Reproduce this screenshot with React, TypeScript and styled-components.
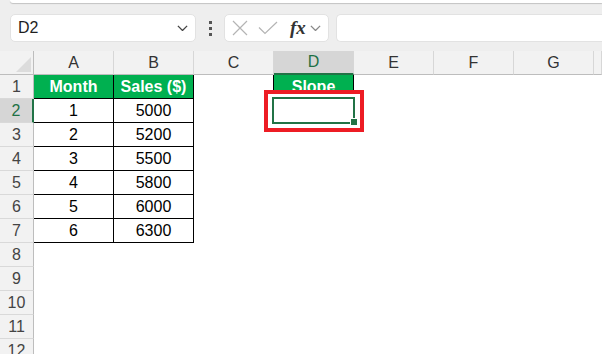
import React from "react";
import styled, { createGlobalStyle } from "styled-components";

const GlobalStyle = createGlobalStyle`
  html, body {
    margin: 0;
    padding: 0;
    background: #ffffff;
    overflow: hidden;
    font-family: "Liberation Sans", Arial, sans-serif;
  }
`;

const Page = styled.div`
  width: 602px;
  height: 354px;
  overflow: hidden;
  background: #ffffff;
`;

const Toolbar = styled.div`
  height: 51px;
  background: #eeeeee;
  display: flex;
  flex-direction: column;
`;

const RibbonEdge = styled.div`
  height: 3px;
  margin-left: 10px;
  background: #ffffff;
  border-bottom-left-radius: 6px;
  box-shadow: 0 1px 1px rgba(0, 0, 0, 0.18);
`;

const FormulaRow = styled.div`
  display: flex;
  align-items: center;
  margin-top: 11px;
  height: 28px;
  padding-left: 10px;
`;

const NameBox = styled.div`
  width: 186px;
  height: 28px;
  box-sizing: border-box;
  background: #ffffff;
  border-radius: 5px;
  border: 1px solid #e2e2e2;
  display: flex;
  align-items: center;
  justify-content: space-between;
  padding: 0 7px 0 7px;
  font-size: 16px;
  color: #1f1f1f;
`;

const Grip = styled.div`
  width: 28px;
  display: flex;
  flex-direction: column;
  align-items: center;
  gap: 3px;
  & span {
    width: 3px;
    height: 3px;
    background: #555555;
  }
`;

const FormulaButtons = styled.div`
  width: 105px;
  height: 28px;
  box-sizing: border-box;
  background: #ffffff;
  border-radius: 5px;
  border: 1px solid #e2e2e2;
  display: flex;
  align-items: center;
  padding-left: 7px;
  gap: 10px;
`;

const Fx = styled.span`
  font-family: "Liberation Serif", "Times New Roman", serif;
  font-style: italic;
  font-weight: bold;
  font-size: 19px;
  color: #333333;
  margin-left: 2px;
  display: flex;
  align-items: center;
  gap: 4px;
`;

const FormulaInput = styled.div`
  flex: 1;
  height: 28px;
  margin-left: 7px;
  box-sizing: border-box;
  background: #ffffff;
  border: 1px solid #e2e2e2;
  border-right: none;
  border-radius: 5px 0 0 5px;
`;

const Sheet = styled.div`
  display: grid;
  grid-template-columns: 34px repeat(7, 80px) 1fr;
  grid-auto-rows: 24px;
  font-size: 16px;
`;

const Corner = styled.div`
  background: #f2f2f2;
  border-right: 1px solid #bdbdbd;
  border-bottom: 1px solid #bdbdbd;
  position: relative;
  &::after {
    content: "";
    position: absolute;
    right: 2px;
    bottom: 2px;
    width: 0;
    height: 0;
    border-left: 15px solid transparent;
    border-bottom: 15px solid #dcdcdc;
  }
`;

const ColHead = styled.div<{ $active?: boolean }>`
  background: ${p => (p.$active ? "#d6d6d6" : "#f2f2f2")};
  color: ${p => (p.$active ? "#1e7145" : "#333333")};
  border-right: 1px solid #d7d7d7;
  border-bottom: ${p => (p.$active ? "2px solid #217346" : "1px solid #bdbdbd")};
  box-sizing: border-box;
  display: flex;
  align-items: center;
  justify-content: center;
`;

const RowHead = styled.div<{ $active?: boolean }>`
  background: ${p => (p.$active ? "#d6d6d6" : "#f2f2f2")};
  color: ${p => (p.$active ? "#1e7145" : "#444444")};
  border-right: ${p => (p.$active ? "2px solid #217346" : "1px solid #bdbdbd")};
  border-bottom: 1px solid #d9d9d9;
  box-sizing: border-box;
  display: flex;
  align-items: center;
  justify-content: center;
`;

const Cell = styled.div<{ $kind?: "title" | "data" | "empty"; $edgeRight?: boolean }>`
  box-sizing: border-box;
  display: flex;
  align-items: center;
  justify-content: center;
  position: relative;
  background: ${p => (p.$kind === "title" ? "#00b050" : "#ffffff")};
  color: ${p => (p.$kind === "title" ? "#ffffff" : "#000000")};
  font-weight: ${p => (p.$kind === "title" ? "bold" : "normal")};
  border-right: ${p => (p.$kind !== "empty" || p.$edgeRight ? "1px solid #000000" : "none")};
  border-bottom: ${p => (p.$kind !== "empty" ? "1px solid #000000" : "none")};
`;

const Callout = styled.div`
  position: absolute;
  left: -10px;
  top: -9px;
  width: 100px;
  height: 42px;
  box-sizing: border-box;
  border: 4px solid #ed1c24;
  background: #ffffff;
  z-index: 1;
`;

const Selection = styled.div`
  position: absolute;
  left: -2px;
  top: -2px;
  width: 83px;
  height: 27px;
  box-sizing: border-box;
  border: 2px solid #217346;
  z-index: 2;
`;

const FillHandle = styled.div`
  position: absolute;
  left: 77px;
  top: 20px;
  width: 6px;
  height: 6px;
  background: #217346;
  outline: 1px solid #ffffff;
`;

const Chevron = ({ color = "#555555", size = 10 }: { color?: string; size?: number }) => (
  <svg width={size} height={size * 0.6} viewBox="0 0 10 6" fill="none">
    <path d="M0.8 0.8 L5 5 L9.2 0.8" stroke={color} strokeWidth="1.2" />
  </svg>
);

const CancelIcon = () => (
  <svg width="16" height="16" viewBox="0 0 16 16" fill="none">
    <path d="M1 1 L15 15 M15 1 L1 15" stroke="#b4b4b4" strokeWidth="1.2" />
  </svg>
);

const CheckIcon = () => (
  <svg width="20" height="14" viewBox="0 0 20 14" fill="none">
    <path d="M1 6.5 L7 12.5 L19 1" stroke="#b4b4b4" strokeWidth="1.2" />
  </svg>
);

const columns = ["A", "B", "C", "D", "E", "F", "G", ""];

const sales: Record<number, [string, string]> = {
  2: ["1", "5000"],
  3: ["2", "5200"],
  4: ["3", "5500"],
  5: ["4", "5800"],
  6: ["5", "6000"],
  7: ["6", "6300"]
};

function renderRow(row: number) {
  const cells: React.ReactNode[] = [];
  columns.forEach((col, i) => {
    const key = `${col || "H"}${row}`;
    if (row === 1 && (col === "A" || col === "B" || col === "D")) {
      const label = col === "A" ? "Month" : col === "B" ? "Sales ($)" : "Slope";
      cells.push(
        <Cell key={key} $kind="title">
          {label}
        </Cell>
      );
    } else if (sales[row] && i < 2) {
      cells.push(
        <Cell key={key} $kind="data">
          {sales[row][i]}
        </Cell>
      );
    } else if (row === 2 && col === "D") {
      cells.push(
        <Cell key={key} $kind="empty">
          <Callout />
          <Selection>
            <FillHandle />
          </Selection>
        </Cell>
      );
    } else {
      cells.push(<Cell key={key} $kind="empty" $edgeRight={row === 1 && col === "C"} />);
    }
  });
  return cells;
}

export default function App() {
  const rows = Array.from({ length: 12 }, (_, i) => i + 1);
  return (
    <Page>
      <GlobalStyle />
      <Toolbar>
        <RibbonEdge />
        <FormulaRow>
          <NameBox>
            <span>D2</span>
            <Chevron color="#444444" size={11} />
          </NameBox>
          <Grip>
            <span />
            <span />
            <span />
          </Grip>
          <FormulaButtons>
            <CancelIcon />
            <CheckIcon />
            <Fx>
              fx
              <Chevron color="#888888" size={11} />
            </Fx>
          </FormulaButtons>
          <FormulaInput />
        </FormulaRow>
      </Toolbar>
      <Sheet>
        <Corner />
        {columns.map(c => (
          <ColHead key={`h${c}`} $active={c === "D"}>
            {c}
          </ColHead>
        ))}
        {rows.map(r => (
          <React.Fragment key={r}>
            <RowHead $active={r === 2}>{r}</RowHead>
            {renderRow(r)}
          </React.Fragment>
        ))}
      </Sheet>
    </Page>
  );
}
